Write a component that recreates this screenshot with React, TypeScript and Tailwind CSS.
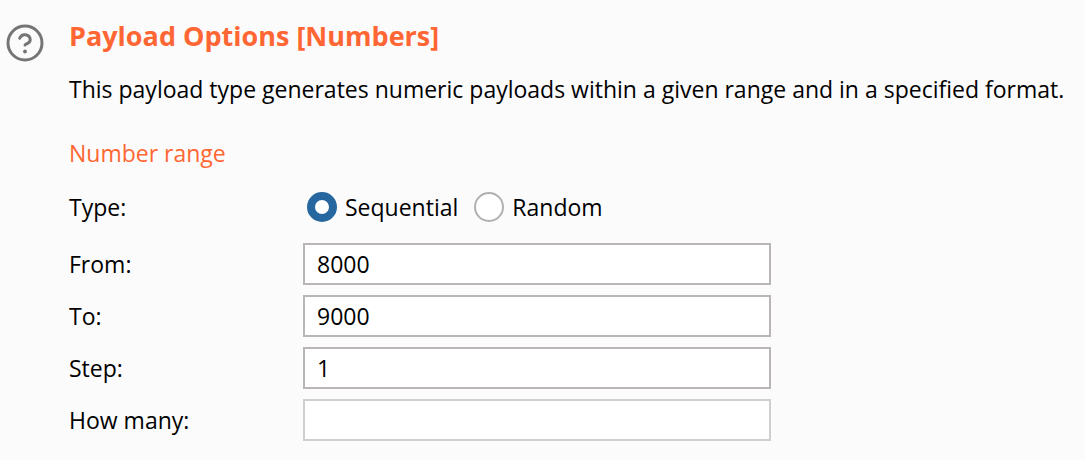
import { useState } from 'react'

type NumberType = 'sequential' | 'random'

interface FieldProps {
  id: string
  label: string
  defaultValue?: string
  disabled?: boolean
}

function HelpIcon() {
  return (
    <svg viewBox="0 0 38 38" className="size-[38px]" fill="none" stroke="#757575" aria-hidden="true">
      <circle cx="19" cy="19" r="17" strokeWidth="3" />
      <path d="M13.700 14.300a5.400 5.400 0 0 1 10.500 1.600c0 3.500-5.200 4-5.200 5.100" strokeWidth="3" strokeLinecap="round" />
      <circle cx="19" cy="27.500" r="1.900" fill="#757575" stroke="none" />
    </svg>
  )
}

function NumberField({ id, label, defaultValue = '', disabled = false }: FieldProps) {
  return (
    <div className="flex items-center">
      <label htmlFor={id} className="w-[234px] shrink-0">{label}</label>
      <input
        id={id}
        type="text"
        defaultValue={defaultValue}
        disabled={disabled}
        className="h-[42px] w-[468px] min-w-0 border-2 border-[#bab5b6] bg-white px-3 outline-none disabled:border-[#cfcfcf]"
      />
    </div>
  )
}

function TypeOption({ value, label, checked, onSelect }: {
  value: NumberType
  label: string
  checked: boolean
  onSelect: (value: NumberType) => void
}) {
  return (
    <label className="flex items-center gap-2">
      <input
        type="radio"
        name="number-type"
        value={value}
        checked={checked}
        onChange={() => onSelect(value)}
        className="size-[30px] appearance-none rounded-full border-2 border-[#b0b0b0] bg-white checked:border-8 checked:border-[#2667a0]"
      />
      {label}
    </label>
  )
}

export default function App() {
  const [type, setType] = useState<NumberType>('sequential')

  return (
    <main className="flex min-h-screen items-start gap-[25px] bg-[#fbfbfb] px-[6px] pt-5 pb-4 font-['Open_Sans','Noto_Sans',sans-serif] text-[23px] leading-8 text-black">
      <button type="button" aria-label="Help" className="mt-1 shrink-0">
        <HelpIcon />
      </button>

      <div className="min-w-0 flex-1">
        <h1 className="text-[27px] font-bold text-[#ff6633]">Payload Options [Numbers]</h1>
        <p className="mt-[21px]">
          This payload type generates numeric payloads within a given range and in a specified format.
        </p>

        <h2 className="mt-8 text-[#ff6633]">Number range</h2>

        <div className="mt-[22px] flex items-center" role="radiogroup" aria-labelledby="type-label">
          <span id="type-label" className="w-[238px] shrink-0">Type:</span>
          <div className="flex gap-4">
            <TypeOption value="sequential" label="Sequential" checked={type === 'sequential'} onSelect={setType} />
            <TypeOption value="random" label="Random" checked={type === 'random'} onSelect={setType} />
          </div>
        </div>

        <div className="mt-5 flex flex-col gap-[10px]">
          <NumberField id="from" label="From:" defaultValue="8000" />
          <NumberField id="to" label="To:" defaultValue="9000" />
          <NumberField id="step" label="Step:" defaultValue="1" />
          <NumberField id="how-many" label="How many:" disabled />
        </div>
      </div>
    </main>
  )
}
